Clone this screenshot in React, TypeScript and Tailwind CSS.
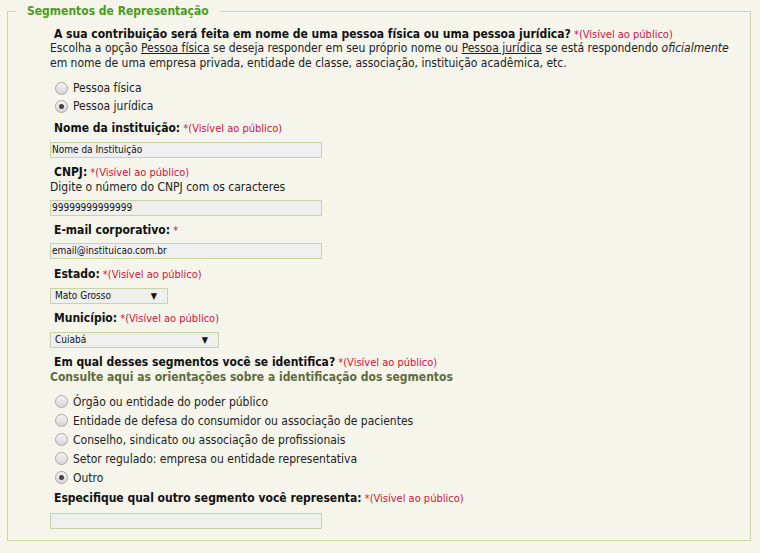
import React from "react";

const body = "font-['DejaVu_Sans_Condensed','Liberation_Sans',sans-serif]";

const Vis = ({ text = true }: { text?: boolean }) => (
  <span className="font-normal text-[11px] text-[#d4143c]">
    {" *"}
    {text && "(Visível ao público)"}
  </span>
);

const Label = ({ children, vis = true, h = "h-[16px] leading-[16px]" }: { children: React.ReactNode; vis?: boolean; h?: string }) => (
  <div className={`${h} pl-[4px] text-[12px] font-bold text-[#111] whitespace-nowrap`}>
    {children}
    <Vis text={vis} />
  </div>
);

const Radio = ({ label, checked = false, h = "h-[19px]" }: { label: string; checked?: boolean; h?: string }) => (
  <div className={`flex items-center ${h} pl-[5px]`}>
    <span className="w-[13px] h-[13px] rounded-full border border-[#a9a9a9] bg-gradient-to-b from-[#f4f4f4] to-[#d6d6d6] flex items-center justify-center">
      {checked && <span className="w-[5px] h-[5px] rounded-full bg-[#444]" />}
    </span>
    <span className="ml-[5px] text-[12px] text-[#222]">{label}</span>
  </div>
);

const TextBox = ({ value, w = "w-[272px]" }: { value: string; w?: string }) => (
  <div
    className={`${w} h-[16px] bg-[#efefef] border border-[#c5d5a3] text-[10px] leading-[14px] pl-[1px] text-[#111]`}
  >
    {value}
  </div>
);

const Select = ({ value, w }: { value: string; w: string }) => (
  <div
    className={`${w} h-[16px] bg-[#efefef] border border-[#c5d5a3] text-[10px] leading-[14px] pl-[4px] pr-[10px] flex justify-between items-center text-[#111]`}
  >
    <span>{value}</span>
    <span className="text-[9px]">▼</span>
  </div>
);

const Line = ({ children }: { children: React.ReactNode }) => (
  <div className="h-[15px] leading-[15px] text-[12px] text-[#222] whitespace-nowrap">{children}</div>
);

export default function App() {
  const segmentos = [
    "Órgão ou entidade do poder público",
    "Entidade de defesa do consumidor ou associação de pacientes",
    "Conselho, sindicato ou associação de profissionais",
    "Setor regulado: empresa ou entidade representativa",
  ];

  return (
    <div className={`${body} min-h-[553px] bg-[#f5f5ec] pt-[3px] pl-[7px] pr-[9px]`}>
      <fieldset className="border border-[#c8d9a8] pl-[8px] pb-[11px]">
        <legend className="px-[11px] text-[12px] leading-[16px] font-bold text-[#4c9a1f]">
          Segmentos de Representação
        </legend>
        <div className="ml-[34px]">
          <div className="mt-[8px]">
            <Label h="h-[14px] leading-[14px]">
              A sua contribuição será feita em nome de uma pessoa física ou uma pessoa jurídica?
            </Label>
          </div>
          <Line>
            Escolha a opção <u>Pessoa física</u> se deseja responder em seu próprio nome ou{" "}
            <u>Pessoa jurídica</u> se está respondendo <i>oficialmente</i>
          </Line>
          <Line>em nome de uma empresa privada, entidade de classe, associação, instituição acadêmica, etc.</Line>
          <div className="mt-[8px] flex flex-col">
            <Radio label="Pessoa física" h="h-[18px]" />
            <Radio label="Pessoa jurídica" h="h-[18px]" checked />
          </div>

          <div className="mt-[5px]">
            <Label>Nome da instituição:</Label>
          </div>
          <div className="mt-[6px]">
            <TextBox value="Nome da Instituição" />
          </div>

          <div className="mt-[6px]">
            <Label>CNPJ:</Label>
          </div>
          <Line>Digite o número do CNPJ com os caracteres</Line>
          <div className="mt-[5px]">
            <TextBox value="99999999999999" />
          </div>

          <div className="mt-[6px]">
            <Label vis={false}>E-mail corporativo:</Label>
          </div>
          <div className="mt-[5px]">
            <TextBox value="email@instituicao.com.br" />
          </div>

          <div className="mt-[7px]">
            <Label>Estado:</Label>
          </div>
          <div className="mt-[6px]">
            <Select value="Mato Grosso" w="w-[118px]" />
          </div>

          <div className="mt-[6px]">
            <Label>Município:</Label>
          </div>
          <div className="mt-[6px]">
            <Select value="Cuiabá" w="w-[169px]" />
          </div>

          <div className="mt-[6px]">
            <Label>Em qual desses segmentos você se identifica?</Label>
          </div>
          <div className="h-[15px] leading-[15px] text-[12px] font-bold text-[#5e6b3c]">
            Consulte aqui as orientações sobre a identificação dos segmentos
          </div>
          <div className="mt-[7px] flex flex-col">
            {segmentos.map((s) => (
              <Radio key={s} label={s} />
            ))}
            <Radio label="Outro" checked />
          </div>

          <div className="mt-[3px]">
            <Label>Especifique qual outro segmento você representa:</Label>
          </div>
          <div className="mt-[7px]">
            <TextBox value="" />
          </div>
        </div>
      </fieldset>
    </div>
  );
}
